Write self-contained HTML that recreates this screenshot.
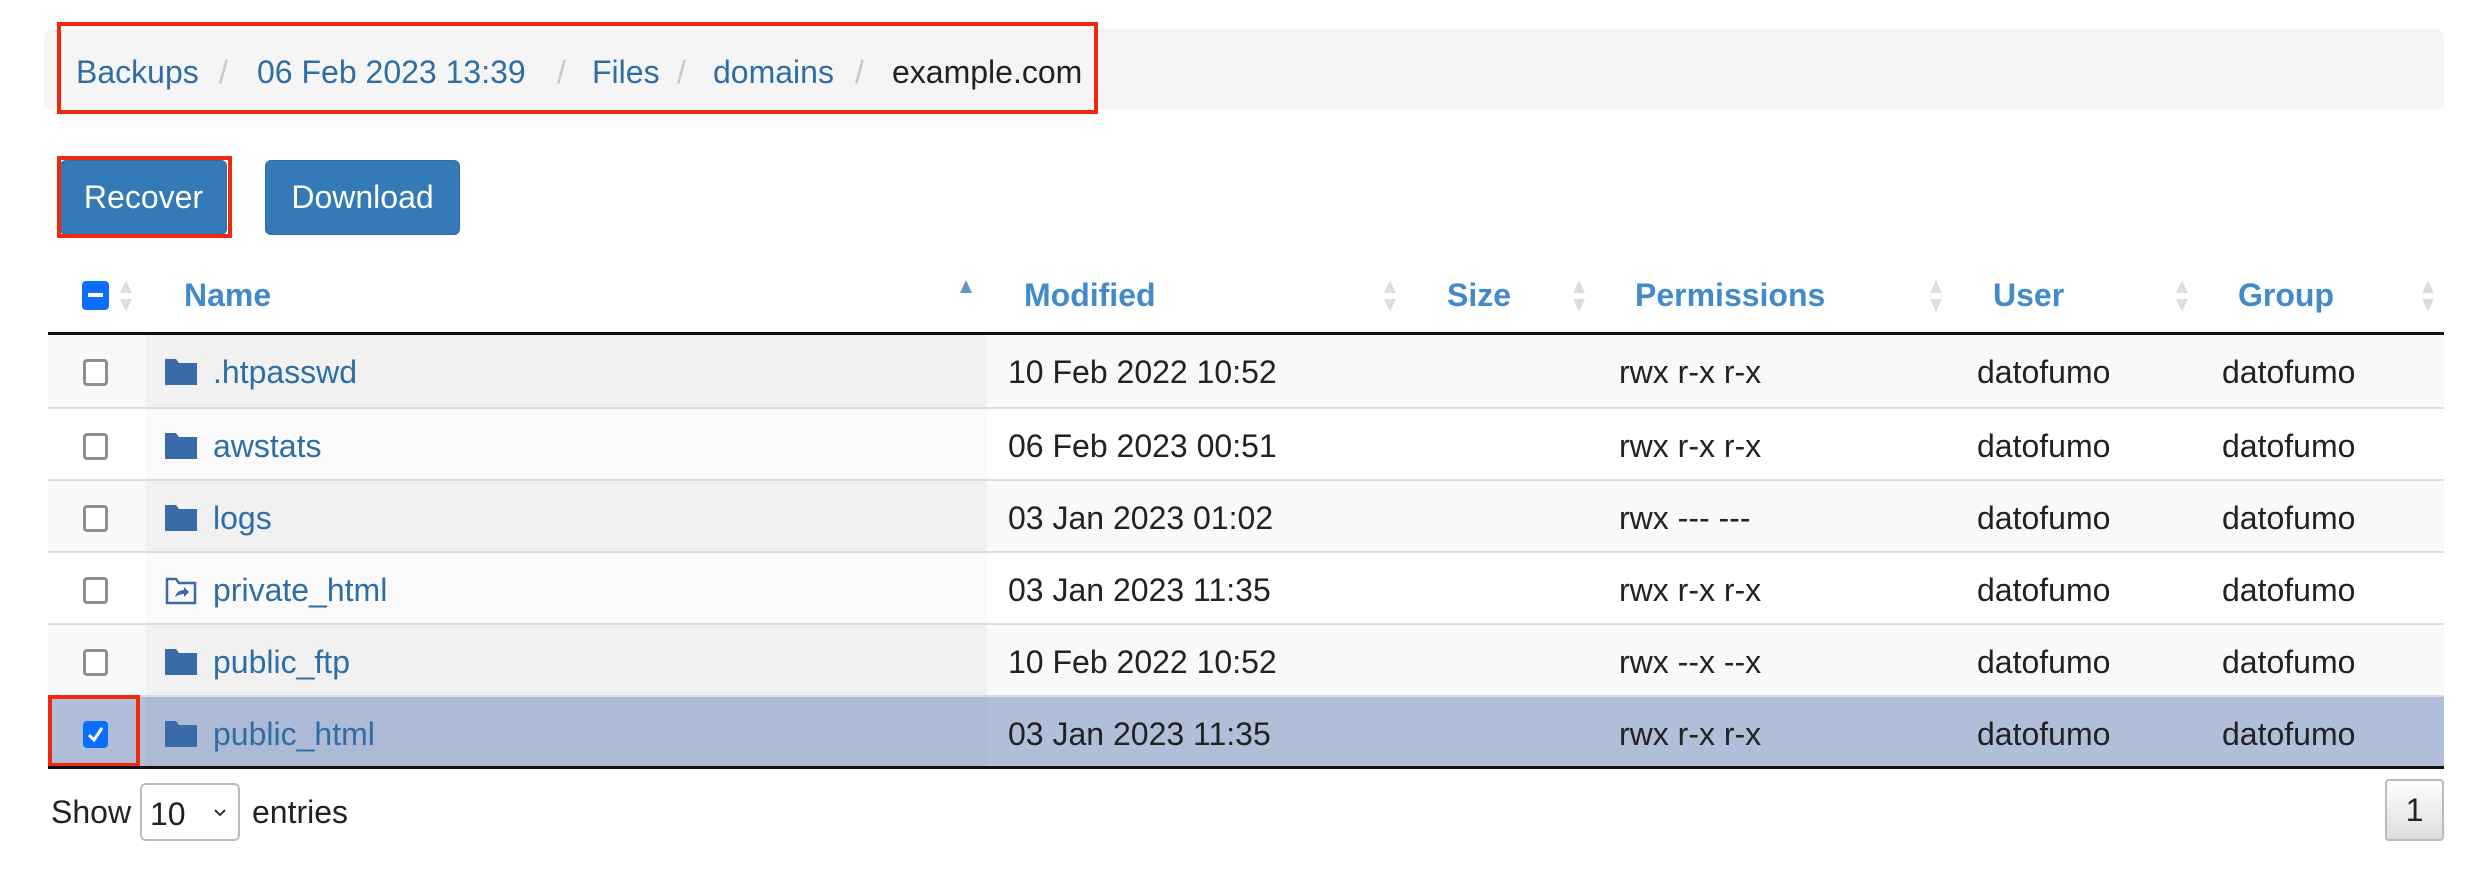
<!DOCTYPE html>
<html><head><meta charset="utf-8"><style>
*{margin:0;padding:0;box-sizing:border-box}
body{width:2488px;height:892px;background:#fff;font-family:"Liberation Sans",Helvetica,Arial,sans-serif;color:#222;position:relative;overflow:hidden}
.a{position:absolute;white-space:nowrap}
.bc{left:44px;top:29px;width:2400px;height:80px;background:#f5f5f5;border-radius:8px}
.red{position:absolute;border:4px solid #f0290e}
.bct{font-size:32px;top:54px;color:#2f6da6}
.sep{color:#c8c8c8}
.btn{position:absolute;top:160px;height:75px;background:#337ab7;border:1px solid #2e6da4;border-radius:6px;color:#fff;font-size:32px;line-height:73px;text-align:center}
.th{top:277px;font-size:32px;font-weight:bold;color:#428bca}
.arr{position:absolute;width:14px;height:36px;top:278px}
.row{position:absolute;left:48px;width:2396px;height:72px;border-top:2px solid #ddd}
.row .nc{position:absolute;left:98px;top:0;width:841px;height:100%}
.cell{position:absolute;top:19px;font-size:32px;color:#222}
.nm{color:#2f6da6}
.cb{position:absolute;left:35px;top:24px;width:25px;height:27px;border:3px solid #8e8e93;border-radius:4px;background:#fff}
.fold{position:absolute;left:117px;top:24px}
</style></head><body>
<div class="a bc"></div>
<div class="red" style="left:57px;top:22px;width:1041px;height:92px"></div>
<div class="a bct" style="left:76px">Backups</div>
<div class="a bct sep" style="left:219px">/</div>
<div class="a bct" style="left:257px">06 Feb 2023 13:39</div>
<div class="a bct sep" style="left:557px">/</div>
<div class="a bct" style="left:592px">Files</div>
<div class="a bct sep" style="left:677px">/</div>
<div class="a bct" style="left:713px">domains</div>
<div class="a bct sep" style="left:855px">/</div>
<div class="a bct" style="left:892px;color:#222">example.com</div>

<div class="btn" style="left:60px;width:167px">Recover</div>
<div class="red" style="left:57px;top:156px;width:175px;height:82px"></div>
<div class="btn" style="left:265px;width:195px">Download</div>

<div class="a" style="left:82px;top:281px;width:27px;height:29px;background:#0b6efd;border-radius:4px"><div style="position:absolute;left:6px;top:12px;width:15px;height:4px;background:#fff"></div></div>
<svg class="arr" style="left:119px" viewBox="0 0 14 36"><path d="M7 2L13 15H1Z M7 34L13 21H1Z" fill="#ddd"/></svg>
<div class="a th" style="left:184px">Name</div>
<svg class="arr" style="left:959px" viewBox="0 0 14 36"><path d="M7 2L13 15H1Z" fill="#6f93c0"/></svg>
<div class="a th" style="left:1024px">Modified</div>
<svg class="arr" style="left:1383px" viewBox="0 0 14 36"><path d="M7 2L13 15H1Z M7 34L13 21H1Z" fill="#ddd"/></svg>
<div class="a th" style="left:1447px">Size</div>
<svg class="arr" style="left:1572px" viewBox="0 0 14 36"><path d="M7 2L13 15H1Z M7 34L13 21H1Z" fill="#ddd"/></svg>
<div class="a th" style="left:1635px">Permissions</div>
<svg class="arr" style="left:1929px" viewBox="0 0 14 36"><path d="M7 2L13 15H1Z M7 34L13 21H1Z" fill="#ddd"/></svg>
<div class="a th" style="left:1993px">User</div>
<svg class="arr" style="left:2175px" viewBox="0 0 14 36"><path d="M7 2L13 15H1Z M7 34L13 21H1Z" fill="#ddd"/></svg>
<div class="a th" style="left:2238px">Group</div>
<svg class="arr" style="left:2421px" viewBox="0 0 14 36"><path d="M7 2L13 15H1Z M7 34L13 21H1Z" fill="#ddd"/></svg>
<div class="a" style="left:48px;top:332px;width:2396px;height:3px;background:#111"></div>

<div class="row" style="top:335px;background:#f9f9f9;border-top:none"><div class="nc" style="background:#f1f1f1"></div><div class="cb"></div>
<svg class="fold" width="32" height="26" viewBox="0 0 32 26"><path d="M0 0H11L14 4H32V26H0Z" fill="#3a6aa8"/></svg>
<div class="cell nm" style="left:165px">.htpasswd</div><div class="cell" style="left:960px">10 Feb 2022 10:52</div><div class="cell" style="left:1571px">rwx r-x r-x</div><div class="cell" style="left:1929px">datofumo</div><div class="cell" style="left:2174px">datofumo</div></div>

<div class="row" style="top:407px;background:#fff"><div class="nc" style="background:#fafafa"></div><div class="cb"></div>
<svg class="fold" width="32" height="26" viewBox="0 0 32 26"><path d="M0 0H11L14 4H32V26H0Z" fill="#3a6aa8"/></svg>
<div class="cell nm" style="left:165px">awstats</div><div class="cell" style="left:960px">06 Feb 2023 00:51</div><div class="cell" style="left:1571px">rwx r-x r-x</div><div class="cell" style="left:1929px">datofumo</div><div class="cell" style="left:2174px">datofumo</div></div>

<div class="row" style="top:479px;background:#f9f9f9"><div class="nc" style="background:#f1f1f1"></div><div class="cb"></div>
<svg class="fold" width="32" height="26" viewBox="0 0 32 26"><path d="M0 0H11L14 4H32V26H0Z" fill="#3a6aa8"/></svg>
<div class="cell nm" style="left:165px">logs</div><div class="cell" style="left:960px">03 Jan 2023 01:02</div><div class="cell" style="left:1571px">rwx --- ---</div><div class="cell" style="left:1929px">datofumo</div><div class="cell" style="left:2174px">datofumo</div></div>

<div class="row" style="top:551px;background:#fff"><div class="nc" style="background:#fafafa"></div><div class="cb"></div>
<svg class="fold" width="32" height="28" viewBox="0 0 32 28"><path d="M2 2H11L14 6H30V26H2Z" fill="none" stroke="#3a6aa8" stroke-width="2.5"/><path d="M10 20Q12 13 19 13V10L24 15L19 20V17Q14 17 10 20Z" fill="#3a6aa8"/></svg>
<div class="cell nm" style="left:165px">private_html</div><div class="cell" style="left:960px">03 Jan 2023 11:35</div><div class="cell" style="left:1571px">rwx r-x r-x</div><div class="cell" style="left:1929px">datofumo</div><div class="cell" style="left:2174px">datofumo</div></div>

<div class="row" style="top:623px;background:#f9f9f9"><div class="nc" style="background:#f1f1f1"></div><div class="cb"></div>
<svg class="fold" width="32" height="26" viewBox="0 0 32 26"><path d="M0 0H11L14 4H32V26H0Z" fill="#3a6aa8"/></svg>
<div class="cell nm" style="left:165px">public_ftp</div><div class="cell" style="left:960px">10 Feb 2022 10:52</div><div class="cell" style="left:1571px">rwx --x --x</div><div class="cell" style="left:1929px">datofumo</div><div class="cell" style="left:2174px">datofumo</div></div>

<div class="row" style="top:695px;background:#b0bed9"><div class="nc" style="background:#acbad5"></div>
<div class="cb" style="background:#0b6efd;border-color:#0b6efd"><svg width="19" height="21" viewBox="0 0 19 21" style="position:absolute;left:0;top:0"><path d="M3 11L8 16L16 4" fill="none" stroke="#fff" stroke-width="3"/></svg></div>
<svg class="fold" width="32" height="26" viewBox="0 0 32 26"><path d="M0 0H11L14 4H32V26H0Z" fill="#3a6aa8"/></svg>
<div class="cell nm" style="left:165px">public_html</div><div class="cell" style="left:960px">03 Jan 2023 11:35</div><div class="cell" style="left:1571px">rwx r-x r-x</div><div class="cell" style="left:1929px">datofumo</div><div class="cell" style="left:2174px">datofumo</div></div>
<div class="red" style="left:48px;top:695px;width:92px;height:72px"></div>
<div class="a" style="left:48px;top:766px;width:2396px;height:3px;background:#111"></div>

<div class="a" style="left:51px;top:794px;font-size:32px">Show</div>
<div class="a" style="left:140px;top:783px;width:100px;height:58px;border:2px solid #bbb;border-radius:6px;background:#fff"><span style="position:absolute;left:8px;top:11px;font-size:32px">10</span><svg style="position:absolute;left:72px;top:24px" width="12" height="8" viewBox="0 0 12 8"><path d="M1 1L6 6L11 1" fill="none" stroke="#333" stroke-width="2"/></svg></div>
<div class="a" style="left:252px;top:794px;font-size:32px">entries</div>
<div class="a" style="left:2385px;top:779px;width:59px;height:62px;border:2px solid #bbb;border-radius:4px;background:linear-gradient(#fff,#ddd);font-size:32px;text-align:center;line-height:58px">1</div>
</body></html>
